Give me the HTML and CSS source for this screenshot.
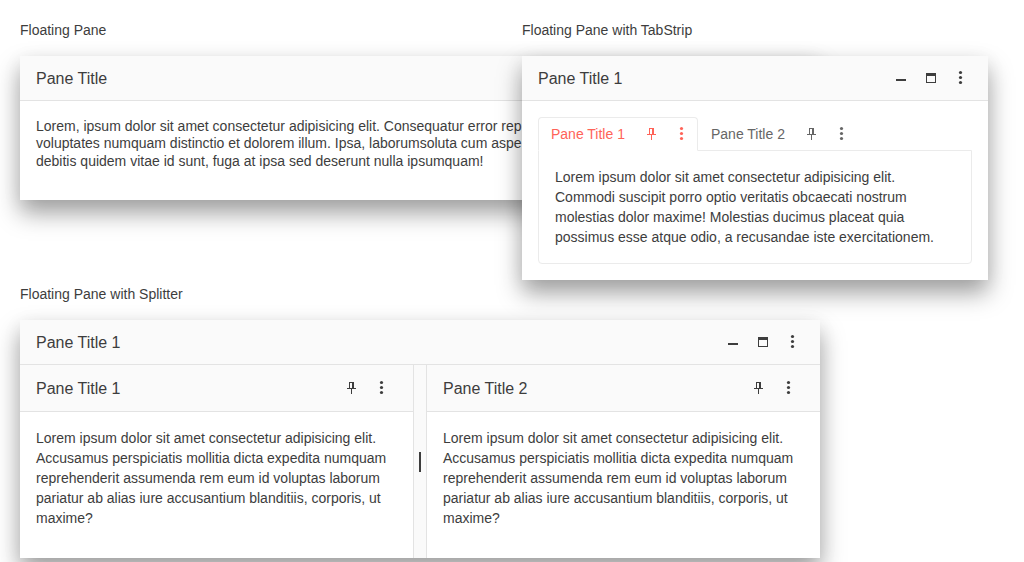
FILE: index.html
```html
<!DOCTYPE html>
<html lang="en">
<head>
<meta charset="utf-8">
<title>Floating Panes</title>
<link rel="stylesheet" href="styles.css">
</head>
<body>
<svg width="0" height="0" class="sprite" aria-hidden="true">
  <symbol id="min" viewBox="0 0 16 16"><path d="M3 9h10v2H3z"/></symbol>
  <symbol id="max" viewBox="0 0 16 16"><path fill-rule="evenodd" d="M3 3h10v10H3zM4 6v6h8V6z"/></symbol>
  <symbol id="dots" viewBox="0 0 16 16"><circle cx="7.5" cy="2.5" r="1.6"/><circle cx="7.5" cy="7.5" r="1.6"/><circle cx="7.5" cy="12.5" r="1.6"/></symbol>
  <symbol id="pin" viewBox="0 0 16 16"><path fill-rule="evenodd" d="M5 2h5v6h2v1H8v5H7V9H3V8h2zM6 3v5h2V3z"/></symbol>
</svg>
<main class="page">
  <section class="demo">
    <h2 class="label">Floating Pane</h2>
    <div class="pane pane-wide pane-basic">
      <header class="titlebar"><span class="title">Pane Title</span></header>
      <div class="body compact">Lorem, ipsum dolor sit amet consectetur adipisicing elit. Consequatur error rep<br>voluptates numquam distinctio et dolorem illum. Ipsa, laborumsoluta cum aspe<br>debitis quidem vitae id sunt, fuga at ipsa sed deserunt nulla ipsumquam!</div>
    </div>
  </section>
  <section class="demo">
    <h2 class="label">Floating Pane with TabStrip</h2>
    <div class="pane pane-tabs">
      <header class="titlebar"><span class="title">Pane Title 1</span>
        <span class="actions"><svg class="icon"><use href="#min"/></svg><svg class="icon"><use href="#max"/></svg><svg class="icon"><use href="#dots"/></svg></span>
      </header>
      <div class="tabstrip">
        <div class="tabs">
          <div class="tab active"><span>Pane Title 1</span><span class="actions"><svg class="icon"><use href="#pin"/></svg><svg class="icon"><use href="#dots"/></svg></span></div>
          <div class="tab"><span>Pane Title 2</span><span class="actions"><svg class="icon"><use href="#pin"/></svg><svg class="icon"><use href="#dots"/></svg></span></div>
        </div>
        <div class="tab-content">Lorem ipsum dolor sit amet consectetur adipisicing elit.<br>Commodi suscipit porro optio veritatis obcaecati nostrum<br>molestias dolor maxime! Molestias ducimus placeat quia<br>possimus esse atque odio, a recusandae iste exercitationem.</div>
      </div>
    </div>
  </section>
  <section class="demo">
    <h2 class="label">Floating Pane with Splitter</h2>
    <div class="pane pane-wide pane-split">
      <header class="titlebar"><span class="title">Pane Title 1</span>
        <span class="actions"><svg class="icon"><use href="#min"/></svg><svg class="icon"><use href="#max"/></svg><svg class="icon"><use href="#dots"/></svg></span>
      </header>
      <div class="splitter">
        <div class="split">
          <header class="titlebar inner"><span class="title">Pane Title 1</span><span class="actions"><svg class="icon"><use href="#pin"/></svg><svg class="icon"><use href="#dots"/></svg></span></header>
          <div class="body">Lorem ipsum dolor sit amet consectetur adipisicing elit.<br>Accusamus perspiciatis mollitia dicta expedita numquam<br>reprehenderit assumenda rem eum id voluptas laborum<br>pariatur ab alias iure accusantium blanditiis, corporis, ut<br>maxime?</div>
        </div>
        <div class="splitbar"><span class="handle"></span></div>
        <div class="split">
          <header class="titlebar inner"><span class="title">Pane Title 2</span><span class="actions"><svg class="icon"><use href="#pin"/></svg><svg class="icon"><use href="#dots"/></svg></span></header>
          <div class="body">Lorem ipsum dolor sit amet consectetur adipisicing elit.<br>Accusamus perspiciatis mollitia dicta expedita numquam<br>reprehenderit assumenda rem eum id voluptas laborum<br>pariatur ab alias iure accusantium blanditiis, corporis, ut<br>maxime?</div>
        </div>
      </div>
    </div>
  </section>
</main>
</body>
</html>
```
FILE: styles.css
```css
* { box-sizing: border-box; }
html { overflow: hidden; }
body {
  margin: 0;
  background: #fff;
  color: #3d3d3d;
  font: 14px/20px "Liberation Sans", Arial, sans-serif;
}
.sprite { display: none; }
.page {
  display: grid;
  grid-template-columns: 482px 482px;
  grid-template-rows: 244px auto;
  gap: 20px;
  padding: 20px;
}
.label { margin: 0 0 16px; font-size: 14px; font-weight: 400; line-height: 20px; }
.pane {
  display: flex;
  flex-direction: column;
  position: relative;
  background: #fff;
  box-shadow: 0 13px 23px rgba(0, 0, 0, .36), 0 4px 20px rgba(0, 0, 0, .06);
}
.pane-wide { width: 800px; }
.pane-basic { height: 144px; }
.pane-tabs { width: 466px; height: 224px; }
.pane-split { height: 238px; }
.titlebar {
  display: flex;
  align-items: center;
  justify-content: space-between;
  flex: none;
  height: 45px;
  padding: 0 19px 0 16px;
  background: #fafafa;
  border-bottom: 1px solid #e3e3e3;
}
.inner { height: 47px; padding-right: 23px; }
.title { padding-top: 2px; font-size: 16px; line-height: 20px; }
.actions { display: flex; gap: 14px; }
.icon { display: block; flex: none; width: 16px; height: 16px; fill: currentColor; }
.body { flex: 1; padding: 16px; white-space: nowrap; }
.compact { padding-top: 16.5px; line-height: 17.5px; }
.tabstrip { padding: 16px; }
.tabs { display: flex; }
.tab {
  display: flex;
  align-items: center;
  gap: 19px;
  width: 160px;
  height: 34px;
  margin-bottom: -1px;
  padding: 0 12px;
  border: 1px solid transparent;
  color: #666;
  white-space: nowrap;
}
.tab.active {
  position: relative;
  z-index: 1;
  background: #fff;
  border-color: #ebebeb;
  border-bottom-color: #fff;
  border-radius: 4px 4px 0 0;
  color: #ff6358;
}
.tab-content {
  height: 114px;
  padding: 16px;
  border: 1px solid #ebebeb;
  border-radius: 0 0 4px 4px;
  white-space: nowrap;
}
.splitter { display: flex; flex: 1; }
.split { display: flex; flex-direction: column; flex: 1; min-width: 0; }
.splitbar {
  display: flex;
  align-items: center;
  justify-content: center;
  width: 14px;
  background: #fafafa;
  border: solid #e3e3e3;
  border-width: 0 1px;
}
.handle { width: 2px; height: 20px; background: #3d3d3d; }
```
